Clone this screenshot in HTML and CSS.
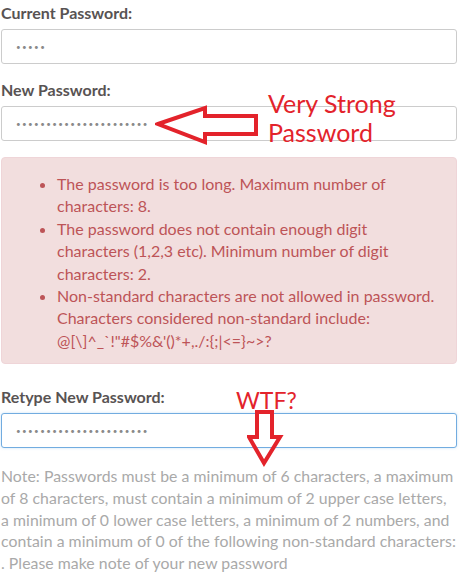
FILE: index.html
```html
<!DOCTYPE html>
<html lang="en">
<head>
<meta charset="UTF-8">
<meta name="viewport" content="width=device-width, initial-scale=1.0">
<title>Change Password</title>
<link rel="stylesheet" href="styles.css">
</head>
<body>
<div class="container">
    <form class="password-form">
        <div class="form-group">
            <label for="currentPassword">Current Password:</label>
            <input type="password" id="currentPassword" value="abcde">
        </div>
        <div class="form-group">
            <label for="newPassword">New Password:</label>
            <input type="password" id="newPassword" value="abcdefghijklmnopqrstuv">
        </div>
        <div class="alert alert-danger">
            <ul>
                <li>The password is too long. Maximum number of characters: 8.</li>
                <li>The password does not contain enough digit characters (1,2,3 etc). Minimum number of digit characters: 2.</li>
                <li>Non-standard characters are not allowed in password. Characters considered non-standard include: @[\]^_`!"#$%&amp;'()*+,./:{;|&lt;=}~&gt;?</li>
            </ul>
        </div>
        <div class="form-group retype">
            <label for="confirmPassword">Retype New Password:</label>
            <input type="password" id="confirmPassword" class="focused" value="abcdefghijklmnopqrstuv">
        </div>
        <p class="note">Note: Passwords must be a minimum of 6 characters, a maximum of 8 characters, must contain a minimum of 2 upper case letters, a minimum of 0 lower case letters, a minimum of 2 numbers, and contain a minimum of 0 of the following non-standard characters: . Please make note of your new password</p>
    </form>

    <!-- annotations drawn over the form -->
    <div class="note-strong">Very Strong<br>Password</div>
    <svg class="arrow-left" width="110" height="44" viewBox="0 0 110 44">
        <polygon points="3,19 50,3 50,11 101,11 101,29 50,29 50,37" fill="none" stroke="#e3232b" stroke-width="4" stroke-linejoin="miter"/>
    </svg>
    <div class="note-wtf">WTF?</div>
    <svg class="arrow-down" width="40" height="58" viewBox="0 0 40 58">
        <polygon points="10,2 25,2 25,27 33,27 17,53 2,27 10,27" fill="none" stroke="#e3232b" stroke-width="4" stroke-linejoin="miter"/>
    </svg>
</div>
</body>
</html>
```

FILE: styles.css
```css
body {
    margin: 0;
    font-family: Lato, "Open Sans", sans-serif;
    background-color: #fff;
}
.container {
    position: relative;
    width: 456px;
    padding: 3px 0 0 1px;
}
.form-group {
    margin-bottom: 16px;
}
.form-group label {
    display: block;
    font-size: 16px;
    font-weight: bold;
    line-height: 20px;
    color: #585353;
    margin-bottom: 6px;
}
.form-group input {
    display: block;
    box-sizing: border-box;
    width: 100%;
    height: 35px;
    padding: 0 14px;
    font-family: Lato, sans-serif;
    font-size: 8px;
    letter-spacing: 1.4px;
    color: #8a8a8a;
    border: 1px solid #ccc;
    border-radius: 3px;
    background-color: #fff;
    outline: none;
}
.form-group input.focused {
    border-color: #72ace0;
    box-shadow: 0 0 3px rgba(102,175,233,0.35);
}
.alert {
    padding: 15px 15px 11px 15px;
    margin-bottom: 23px;
    border: 1px solid #efd5d8;
    border-radius: 4px;
}
.alert-danger {
    background-color: #f2dede;
    color: #bd5457;
}
.alert ul {
    margin: 0;
    padding-left: 40px;
    font-size: 16px;
    line-height: 22.4px;
}
.retype {
    margin-bottom: 17px;
}
.note {
    margin: 0;
    font-size: 15.8px;
    letter-spacing: 0.05px;
    line-height: 21.7px;
    color: #a9a9a9;
}
.note-strong {
    position: absolute;
    left: 268px;
    top: 89px;
    font-family: Lato, sans-serif;
    font-size: 25px;
    line-height: 29px;
    color: #e3232b;
}
.arrow-left {
    position: absolute;
    left: 155px;
    top: 105px;
}
.note-wtf {
    position: absolute;
    left: 236px;
    top: 387px;
    font-family: Lato, sans-serif;
    font-size: 23px;
    line-height: 26px;
    color: #e3232b;
}
.arrow-down {
    position: absolute;
    left: 247px;
    top: 410px;
}
```
